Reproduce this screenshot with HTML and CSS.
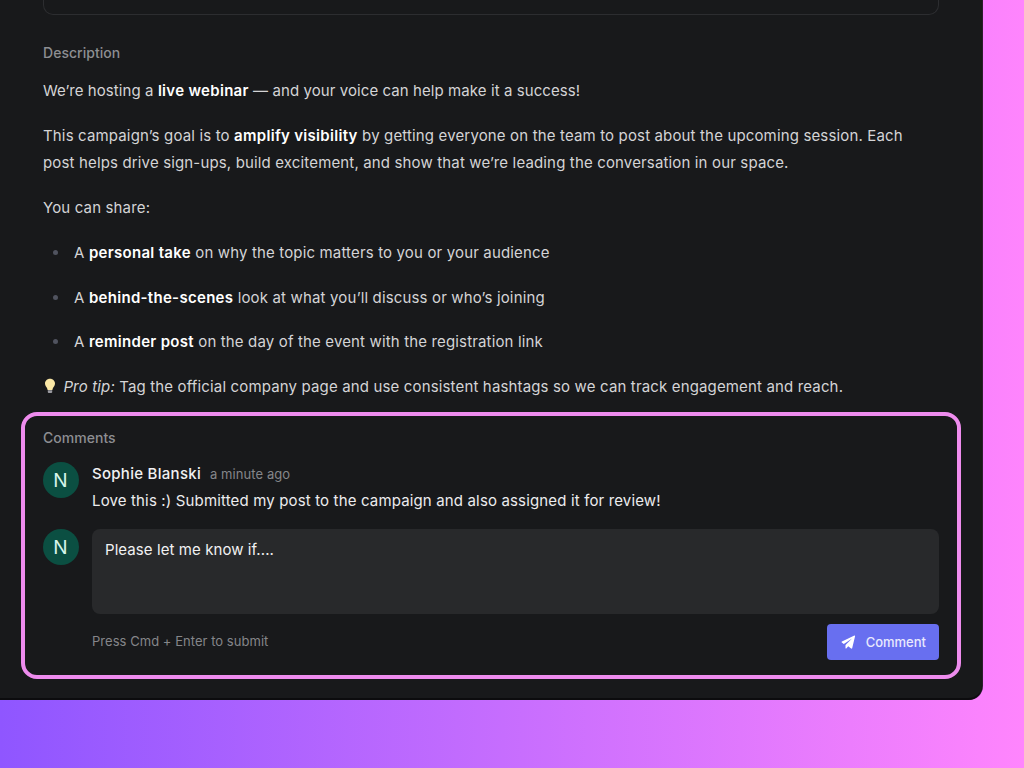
FILE: index.html
```html
<!DOCTYPE html>
<html lang="en">
<head>
    <meta charset="UTF-8">
    <title>Campaign details</title>
    <link rel="stylesheet" href="styles.css">
</head>
<body>
    <div class="panel">
        <div class="top-box"></div>

        <section class="description">
            <h2 class="section-label">Description</h2>
            <p class="intro">We’re hosting a <strong>live webinar</strong> — and your voice can help make it a success!</p>
            <p>This campaign’s goal is to <strong>amplify visibility</strong> by getting everyone on the team to post about the upcoming session. Each post helps drive sign-ups, build excitement, and show that we’re leading the conversation in our space.</p>
            <p>You can share:</p>
            <ul>
                <li>A <strong>personal take</strong> on why the topic matters to you or your audience</li>
                <li>A <strong>behind-the-scenes</strong> look at what you’ll discuss or who’s joining</li>
                <li>A <strong>reminder post</strong> on the day of the event with the registration link</li>
            </ul>
            <p class="tip">
                <svg class="bulb" width="14" height="16" viewBox="0 0 14 16" aria-hidden="true">
                    <path d="M7 .8c-3 0-5 2.200-5 4.800 0 2.100 1.500 3.300 2.200 5 .2.500.3.900.4 1.300h4.800c.1-.4.200-.8.400-1.300.7-1.700 2.200-2.900 2.200-5C12 3 10 .8 7 .8z" fill="#fbe8a6"/>
                    <path d="M4.800 12.300h4.400v1.800c0 .5-.4.900-.9.900H5.700c-.5 0-.9-.4-.9-.9z" fill="#9a9aa0"/>
                </svg>
                <em>Pro tip:</em> Tag the official company page and use consistent hashtags so we can track engagement and reach.
            </p>
        </section>

        <section class="comments">
            <h2 class="section-label">Comments</h2>
            <div class="comment">
                <div class="avatar">N</div>
                <div class="comment-body">
                    <div class="comment-head">
                        <span class="author">Sophie Blanski</span>
                        <span class="time">a minute ago</span>
                    </div>
                    <div class="comment-text">Love this :) Submitted my post to the campaign and also assigned it for review!</div>
                </div>
            </div>
            <div class="reply">
                <div class="avatar">N</div>
                <div class="reply-body">
                    <div class="reply-input">Please let me know if....</div>
                    <div class="reply-foot">
                        <span class="hint">Press Cmd + Enter to submit</span>
                        <button class="submit">
                            <svg width="15" height="15" viewBox="0 0 16 16" aria-hidden="true">
                                <path d="M15 1.200 11.900 14c-.1.500-.7.700-1.100.400L7.700 12 5.600 14.300c-.3.300-.8.100-.8-.3v-3.300l7-6.900-8.800 5.900L.9 8c-.5-.3-.4-1 .1-1.200L14.300.5c.4-.2.800.2.700.7z" fill="#fff"/>
                            </svg>
                            Comment
                        </button>
                    </div>
                </div>
            </div>
        </section>
    </div>
</body>
</html>
```

FILE: styles.css
```css
html, body {
    height: 100%;
}

body {
    margin: 0;
    height: 768px;
    overflow: hidden;
    font-family: 'Inter', sans-serif;
    background: linear-gradient(90deg, #8f56ff 0%, #ff85fd 100%);
}

.panel {
    box-sizing: border-box;
    width: 982px;
    height: 700px;
    padding: 0 21px;
    background-color: #18191b;
    border-radius: 0 0 14px 0;
    border-bottom: 2px solid #0c0c0e;
    box-shadow: 1px 0 0 #2d1a33;
}

.top-box {
    box-sizing: border-box;
    height: 15px;
    margin: 0 22px;
    border: 1px solid #2c2d30;
    border-top: none;
    border-radius: 0 0 10px 10px;
}

.description {
    padding: 28px 22px 0;
    font-size: 15px;
    line-height: 27px;
    color: #d4d4d6;
    letter-spacing: 0.15px;
}

.section-label {
    margin: 0;
    font-size: 14px;
    line-height: 20px;
    font-weight: 500;
    color: #8d8e92;
    letter-spacing: 0.03px;
}

.description p {
    margin: 0 0 18px;
    max-width: 880px;
}

.description .intro {
    letter-spacing: 0.08px;
}

.description .section-label {
    margin-bottom: 14px;
}

.description strong {
    color: #fff;
    font-weight: 600;
    letter-spacing: 0.3px;
}

.description ul {
    margin: 0 0 18px;
    padding-left: 31px;
    list-style: none;
}

.description li {
    position: relative;
    margin-bottom: 18px;
}

.description li:last-child {
    margin-top: -1px;
}

.description li::before {
    content: "";
    position: absolute;
    left: -21px;
    top: 11px;
    width: 5px;
    height: 5px;
    border-radius: 50%;
    background-color: #50535f;
}

.bulb {
    vertical-align: -2px;
    margin-right: 2px;
}

.comments {
    box-sizing: border-box;
    height: 267px;
    margin-top: -6px;
    padding: 12px 18px 0 18px;
    border: 4px solid #ee8cee;
    border-radius: 16px;
    background-color: #18191b;
}

.comment {
    display: flex;
    gap: 13px;
    margin-top: 14px;
}

.avatar {
    flex: none;
    width: 36px;
    height: 36px;
    margin-left: -0.5px;
    margin-right: 0.5px;
    border-radius: 50%;
    background-color: #0b4f42;
    color: #d6f5ea;
    font-size: 19px;
    line-height: 37px;
    text-align: center;
}

.comment-head {
    display: flex;
    align-items: baseline;
    gap: 9px;
    padding-top: 1px;
    line-height: 22px;
}

.author {
    font-size: 15px;
    font-weight: 500;
    color: #f1f1f2;
    letter-spacing: 0.28px;
}

.time {
    font-size: 13px;
    color: #85868a;
    letter-spacing: 0.08px;
}

.comment-text {
    margin-top: 5px;
    font-size: 15px;
    line-height: 22px;
    color: #ececee;
    letter-spacing: 0.15px;
}

.reply {
    display: flex;
    gap: 13px;
    margin-top: 17px;
}

.reply-body {
    flex: 1;
}

.reply-input {
    box-sizing: border-box;
    height: 85px;
    padding: 11px 13px;
    border-radius: 8px;
    background-color: #28292b;
    font-size: 15px;
    line-height: 20px;
    color: #f1f1f2;
    letter-spacing: 0.08px;
}

.reply-foot {
    display: flex;
    justify-content: space-between;
    align-items: center;
    margin-top: 10px;
}

.hint {
    padding-bottom: 2px;
    font-size: 13px;
    color: #85868a;
    letter-spacing: 0.04px;
}

.submit {
    display: flex;
    align-items: center;
    gap: 10px;
    height: 36px;
    padding: 0 13px 0 14px;
    border: none;
    border-radius: 4px;
    background-color: #686ff0;
    color: #e9e9fd;
    font-family: inherit;
    font-size: 13px;
    font-weight: 500;
}
```
